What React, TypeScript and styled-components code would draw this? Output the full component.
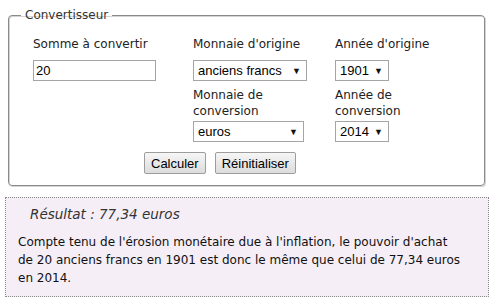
import { FC } from "react";
import styled, { createGlobalStyle } from "styled-components";

const GlobalStyle = createGlobalStyle`
  html, body {
    margin: 0;
    padding: 0;
    background: #fff;
  }
  body {
    font-family: "DejaVu Sans", Verdana, sans-serif;
    font-size: 12px;
    color: #222;
  }
`;

const Page = styled.div`
  width: 490px;
  padding: 8px 0 0 0;
  box-sizing: border-box;
`;

const Fieldset = styled.fieldset`
  margin: 0 5px 0 8px;
  padding: 6px 10px 11px 24px;
  border: 1px solid #8a8a8a;
  box-shadow: inset 1px 1px 0 #d4d4d4, 1px 1px 0 #d4d4d4;
  border-radius: 4px;
  min-width: 0;
`;

const Legend = styled.legend`
  padding: 0 4px;
  margin-left: -12px;
  font-size: 12px;
  color: #333;
`;

const FormGrid = styled.div`
  display: grid;
  grid-template-columns: 160px 142px auto;
`;

const Field = styled.div<{ $row?: number }>`
  display: flex;
  flex-direction: column;
  align-items: flex-start;
  padding-top: ${(p) => (p.$row === 2 ? "6px" : "0")};
`;

const Label = styled.label`
  line-height: 16px;
  height: 32px;
  display: flex;
  align-items: center;
  color: #222;
`;

const TwoLineLabel = styled(Label)`
  height: 34px;
  align-items: flex-start;
`;

const TextInput = styled.input`
  width: 123px;
  height: 21px;
  box-sizing: border-box;
  border: 1px solid #a5a5a5;
  padding: 0 2px;
  font-family: "Liberation Sans", Arial, sans-serif;
  font-size: 13px;
  color: #000;
  outline: none;
`;

const SelectBox = styled.div<{ $w: number }>`
  width: ${(p) => p.$w}px;
  height: 21px;
  box-sizing: border-box;
  border: 1px solid #a5a5a5;
  display: flex;
  align-items: center;
  justify-content: space-between;
  padding: 0 5px 0 4px;
  font-family: "Liberation Sans", Arial, sans-serif;
  font-size: 13px;
  color: #000;
  background: #fff;
`;

const Arrow = styled.span`
  font-size: 9px;
  color: #111;
`;

const Buttons = styled.div`
  display: flex;
  gap: 9px;
  padding: 10px 0 0 111px;
`;

const Button = styled.button`
  height: 22px;
  padding: 0 6px;
  font-family: "Liberation Sans", Arial, sans-serif;
  font-size: 13px;
  color: #000;
  border: 1px solid #9d9d9d;
  border-radius: 2px;
  background: linear-gradient(#f6f6f6, #dcdcdc);
`;

const Result = styled.div`
  margin: 11px 1px 0 5px;
  height: 100px;
  box-sizing: border-box;
  border: 1px dotted #8a8a8a;
  background: #f5eef6;
  padding: 6px 2px 0 12px;
`;

const ResultTitle = styled.h3`
  margin: 0 0 0 12px;
  font-size: 13.5px;
  font-style: italic;
  font-weight: normal;
  color: #333;
  line-height: 20px;
`;

const ResultText = styled.p`
  margin: 9px 0 0 0;
  line-height: 18px;
  font-size: 12px;
  color: #111;
`;

const App: FC = () => (
  <Page>
    <GlobalStyle />
    <Fieldset>
      <Legend>Convertisseur</Legend>
      <FormGrid>
        <Field>
          <Label>Somme à convertir</Label>
          <TextInput defaultValue="20" />
        </Field>
        <Field>
          <Label>Monnaie d'origine</Label>
          <SelectBox $w={114}>
            anciens francs <Arrow>▼</Arrow>
          </SelectBox>
        </Field>
        <Field>
          <Label>Année d'origine</Label>
          <SelectBox $w={54}>
            1901 <Arrow>▼</Arrow>
          </SelectBox>
        </Field>
        <Field $row={2} />
        <Field $row={2}>
          <TwoLineLabel>
            Monnaie de
            <br />
            conversion
          </TwoLineLabel>
          <SelectBox $w={111}>
            euros <Arrow>▼</Arrow>
          </SelectBox>
        </Field>
        <Field $row={2}>
          <TwoLineLabel>
            Année de
            <br />
            conversion
          </TwoLineLabel>
          <SelectBox $w={54}>
            2014 <Arrow>▼</Arrow>
          </SelectBox>
        </Field>
      </FormGrid>
      <Buttons>
        <Button>Calculer</Button>
        <Button>Réinitialiser</Button>
      </Buttons>
    </Fieldset>
    <Result>
      <ResultTitle>Résultat : 77,34 euros</ResultTitle>
      <ResultText>
        Compte tenu de l'érosion monétaire due à l'inflation, le pouvoir d'achat
        <br />
        de 20 anciens francs en 1901 est donc le même que celui de 77,34 euros
        <br />
        en 2014.
      </ResultText>
    </Result>
  </Page>
);

export default App;
